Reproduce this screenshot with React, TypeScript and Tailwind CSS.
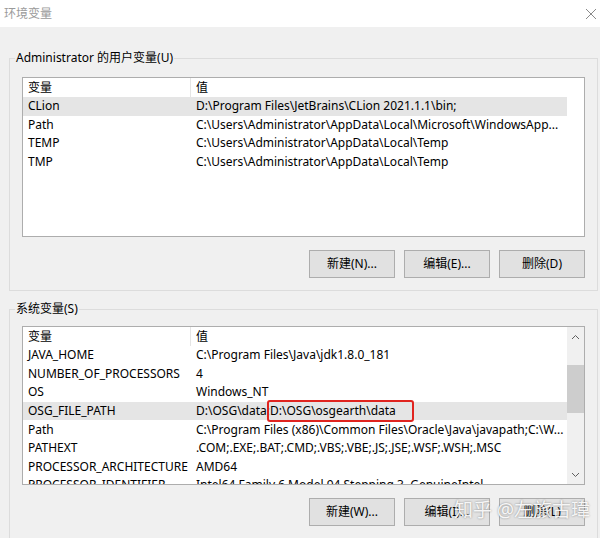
import React from "react";

const FONT = "[font-family:'Noto_Sans','Noto_Sans_CJK_SC',sans-serif]";

type Row = { name: string; value: React.ReactNode; sel?: boolean };

function ListView({ rows, height, scrollbar }: { rows: Row[]; height: string; scrollbar?: boolean }) {
  return (
    <div className={`relative border border-[#adadad] bg-white overflow-hidden ${height}`}>
      <div className="flex h-full">
        <div className="flex-1 min-w-0">
          <div className="flex h-[19px] items-center text-[12px] leading-[16px] text-black">
            <div className="w-[168px] pl-[5px] pt-[1px] border-r border-[#e5e5e5] h-full flex items-center">变量</div>
            <div className="pl-[5px] pt-[1px]">值</div>
          </div>
          {rows.map((r, i) => (
            <div
              key={i}
              className={`flex h-[18.6px] items-center text-[12px] leading-[16px] text-black whitespace-nowrap ${r.sel ? "bg-[#e5e5e5]" : ""}`}
            >
              <div className="w-[168px] pl-[5px] shrink-0 overflow-hidden">{r.name}</div>
              <div className="pl-[5px] flex-1 min-w-0">{r.value}</div>
            </div>
          ))}
        </div>
        {scrollbar ? (
          <div className="w-[17px] shrink-0 bg-[#f0f0f0] flex flex-col items-center">
            <div className="h-[19px] w-full flex items-center justify-center">
              <svg width="9" height="6" viewBox="0 0 9 6" fill="none" stroke="#606060" strokeWidth="1">
                <path d="M1 5 L4.5 1.5 L8 5" />
              </svg>
            </div>
            <div className="h-[19px]" />
            <div className="h-[48px] w-full bg-[#cdcdcd]" />
            <div className="flex-1" />
            <div className="h-[19px] w-full flex items-center justify-center">
              <svg width="9" height="6" viewBox="0 0 9 6" fill="none" stroke="#606060" strokeWidth="1">
                <path d="M1 1 L4.5 4.5 L8 1" />
              </svg>
            </div>
          </div>
        ) : (
          <div className="w-[17px] shrink-0" />
        )}
      </div>
    </div>
  );
}

function Btn({ children }: { children: React.ReactNode }) {
  return (
    <div className="w-[86px] h-[28px] bg-[#e1e1e1] border border-[#adadad] flex items-center justify-center text-[12px] leading-[16px] text-black">
      {children}
    </div>
  );
}

export default function App() {
  const userRows: Row[] = [
    { name: "CLion", value: "D:\\Program Files\\JetBrains\\CLion 2021.1.1\\bin;", sel: true },
    { name: "Path", value: "C:\\Users\\Administrator\\AppData\\Local\\Microsoft\\WindowsApp..." },
    { name: "TEMP", value: "C:\\Users\\Administrator\\AppData\\Local\\Temp" },
    { name: "TMP", value: "C:\\Users\\Administrator\\AppData\\Local\\Temp" },
  ];
  const sysRows: Row[] = [
    { name: "JAVA_HOME", value: "C:\\Program Files\\Java\\jdk1.8.0_181" },
    { name: "NUMBER_OF_PROCESSORS", value: "4" },
    { name: "OS", value: "Windows_NT" },
    {
      name: "OSG_FILE_PATH",
      sel: true,
      value: (
        <span>
          D:\OSG\data;
          <span className="relative">
            D:\OSG\osgearth\data
            <span className="absolute left-[-3px] right-[-18px] top-[-2px] bottom-[-3px] border-2 border-[#e0241f] rounded-[3px]" />
          </span>
        </span>
      ),
    },
    { name: "Path", value: "C:\\Program Files (x86)\\Common Files\\Oracle\\Java\\javapath;C:\\W..." },
    { name: "PATHEXT", value: ".COM;.EXE;.BAT;.CMD;.VBS;.VBE;.JS;.JSE;.WSF;.WSH;.MSC" },
    { name: "PROCESSOR_ARCHITECTURE", value: "AMD64" },
    { name: "PROCESSOR_IDENTIFIER", value: "Intel64 Family 6 Model 94 Stepping 3, GenuineIntel" },
  ];

  return (
    <div className={`w-[600px] h-[538px] bg-[#f0f0f0] overflow-hidden relative ${FONT}`}>
      <div className="h-[27px] bg-white flex items-center justify-between pl-[4px] pr-[3px]">
        <span className="text-[12px] text-[#9a9a9a]">环境变量</span>
        <svg width="12" height="12" viewBox="0 0 12 12" stroke="#8a8a8a" strokeWidth="1">
          <path d="M1 1 L11 11 M11 1 L1 11" />
        </svg>
      </div>

      <div className="pl-[9px] pr-[2px] pt-[31px]">
        <div className="relative border border-[#dcdcdc] pl-[12px] pr-[12px] pt-[18px] pb-[12px]">
          <span className="absolute left-[5px] top-[-9px] bg-[#f0f0f0] px-[1px] text-[12px] leading-[16px] text-black">
            Administrator 的用户变量(U)
          </span>
          <ListView rows={userRows} height="h-[160px]" />
          <div className="flex justify-end gap-[9px] mt-[13px]">
            <Btn>新建(N)...</Btn>
            <Btn>编辑(E)...</Btn>
            <Btn>删除(D)</Btn>
          </div>
        </div>

        <div className="relative border border-[#dcdcdc] pl-[12px] pr-[12px] pt-[16px] pb-[12px] mt-[18px]">
          <span className="absolute left-[5px] top-[-9px] bg-[#f0f0f0] px-[1px] text-[12px] leading-[16px] text-black">
            系统变量(S)
          </span>
          <ListView rows={sysRows} height="h-[159px]" scrollbar />
          <div className="flex justify-end gap-[9px] mt-[13px]">
            <Btn>新建(W)...</Btn>
            <Btn>编辑(I)...</Btn>
            <Btn>删除(L)</Btn>
          </div>
        </div>
      </div>

      <div className="absolute left-[454px] top-[497px] text-[19px] leading-[26px] text-white/90 [text-shadow:0_0_2px_rgba(0,0,0,0.45)] whitespace-nowrap">
        知乎 @左旅古瑋
      </div>
    </div>
  );
}
